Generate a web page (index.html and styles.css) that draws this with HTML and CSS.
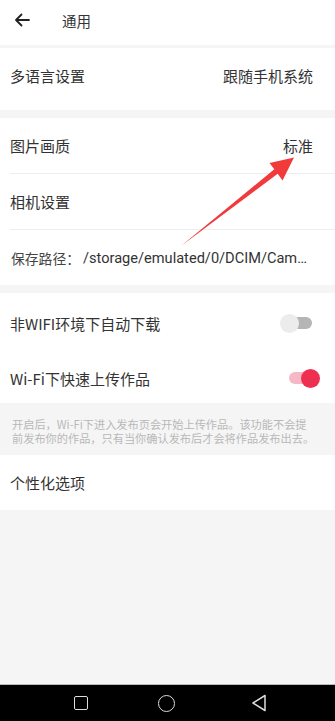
FILE: index.html
```html
<!DOCTYPE html>
<html lang="zh">
<head>
<meta charset="utf-8">
<link rel="stylesheet" href="styles.css">
</head>
<body>
<div class="page">
  <header class="header">
    <svg class="back" width="18" height="16" viewBox="0 0 18 16"><path d="M16 8H3M8.5 2.5L3 8l5.5 5.5" fill="none" stroke="#222" stroke-width="1.8" stroke-linecap="round" stroke-linejoin="round"/></svg>
    <span class="title">通用</span>
  </header>
  <main class="main">
    <section class="group g1">
      <div class="row"><span class="label">多语言设置</span><span class="value">跟随手机系统</span></div>
    </section>
    <section class="group">
      <div class="row line"><span class="label">图片画质</span><span class="value">标准</span></div>
      <div class="row line"><span class="label">相机设置</span></div>
      <div class="row path"><span class="plabel">保存路径：</span><span class="ptext">/storage/emulated/0/DCIM/Cam…</span></div>
    </section>
    <section class="group">
      <div class="row trow"><span class="label">非WIFI环境下自动下载</span><span class="toggle off"><span class="track"></span><span class="knob"></span></span></div>
      <div class="row trow"><span class="label">Wi-Fi下快速上传作品</span><span class="toggle on"><span class="track"></span><span class="knob"></span></span></div>
    </section>
    <p class="desc">开启后，Wi-Fi下进入发布页会开始上传作品。该功能不会提<br>前发布你的作品，只有当你确认发布后才会将作品发布出去。</p>
    <section class="group">
      <div class="row"><span class="label">个性化选项</span></div>
    </section>
  </main>
  <nav class="navbar">
    <span class="nav-square"></span>
    <span class="nav-circle"></span>
    <svg class="nav-back" width="16" height="18" viewBox="0 0 16 18"><path d="M14 1.5L2 9l12 7.5z" fill="none" stroke="#ddd" stroke-width="1.5" stroke-linejoin="round"/></svg>
  </nav>
  <svg class="arrow" width="335" height="721" viewBox="0 0 335 721"><polygon points="181,246 274.3,169.3 269.5,163 294,157.5 282.5,180.5 277.7,173.7" fill="#f03a3c"/></svg>
</div>
</body>
</html>
```
FILE: styles.css
```css
* { box-sizing: border-box; }
html, body { margin: 0; padding: 0; }
body {
  font-family: "Noto Sans CJK SC", "Noto Sans", sans-serif;
  color: #333;
  background: #f5f5f5;
}
.page {
  position: relative;
  width: 335px;
  height: 721px;
  display: flex;
  flex-direction: column;
  background: #f5f5f5;
  overflow: hidden;
}
.header {
  height: 45px;
  background: #fff;
  display: flex;
  align-items: center;
  padding-left: 13px;
  padding-bottom: 5px;
  flex-shrink: 0;
}
.back { display: block; }
.title {
  margin-left: 31px;
  font-size: 14.5px;
  color: #333;
}
.main {
  flex: 1;
  display: flex;
  flex-direction: column;
}
.group {
  background: #fff;
  margin-top: 8px;
  padding-left: 10px;
}
.g1 { margin-top: 3px; }
.row {
  height: 55px;
  display: flex;
  align-items: center;
  justify-content: space-between;
  padding-right: 22px;
}
.g1 .row { height: 62px; padding-bottom: 8px; }
.row.line { border-bottom: 1px solid #eeeeee; height: 56px; }
.label { font-size: 15px; color: #333; }
.value { font-size: 15px; color: #333; }
.path { justify-content: flex-start; padding-right: 0; }
.plabel { font-size: 13.8px; color: #444; margin-left: 1px; }
.ptext {
  font-family: Roboto, "Noto Sans", sans-serif;
  font-size: 14.6px;
  color: #333;
  margin-left: 3px;
  white-space: nowrap;
}
.trow { padding-right: 15px; padding-top: 5px; }
.toggle {
  position: relative;
  width: 40px;
  height: 20px;
  display: block;
}
.toggle .track {
  position: absolute;
  top: 4px;
  height: 12px;
  border-radius: 6px;
}
.toggle .knob {
  position: absolute;
  top: 0.5px;
  width: 19px;
  height: 19px;
  border-radius: 50%;
}
.off .track { left: 12px; width: 20px; background: #b5b5b5; }
.off .knob { left: 0; background: #ececec; }
.on .track { left: 9px; width: 22px; background: #f5b9c5; }
.on .knob { left: 21px; background: #ef2f50; }
.desc {
  margin: 0;
  padding: 14px 8px 0 12px;
  height: 52px;
  font-size: 11.2px;
  line-height: 14px;
  color: #b8b8b8;
  white-space: nowrap;
}
.desc + .group { margin-top: 0; }
.navbar {
  height: 37px;
  flex-shrink: 0;
  background: #000;
  border-top: 1px solid #bbb;
  display: flex;
  align-items: center;
}
.nav-square {
  width: 14px;
  height: 14px;
  border: 1.5px solid #ddd;
  border-radius: 2px;
  margin-left: 74px;
}
.nav-circle {
  width: 17px;
  height: 17px;
  border: 1.5px solid #ddd;
  border-radius: 50%;
  margin-left: 70px;
}
.nav-back { margin-left: 76px; display: block; }
.arrow {
  position: absolute;
  left: 0;
  top: 0;
  pointer-events: none;
}
```
